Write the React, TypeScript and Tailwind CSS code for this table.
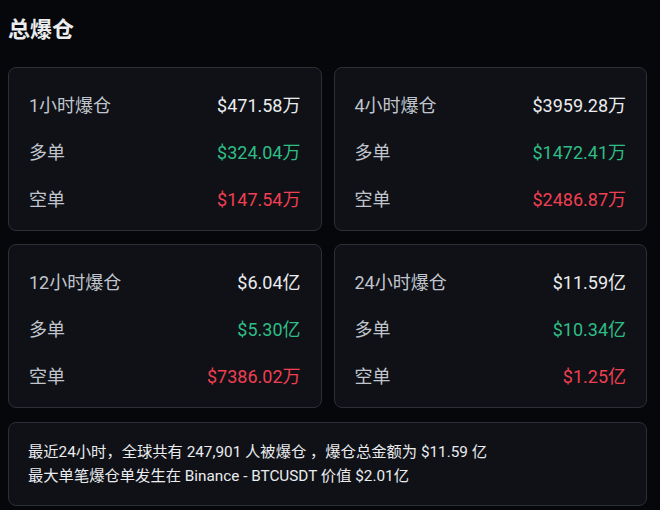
import React from "react";

type Row = { label: string; value: string; tone: "white" | "green" | "red" };

const cards: Row[][] = [
  [
    { label: "1小时爆仓", value: "$471.58万", tone: "white" },
    { label: "多单", value: "$324.04万", tone: "green" },
    { label: "空单", value: "$147.54万", tone: "red" },
  ],
  [
    { label: "4小时爆仓", value: "$3959.28万", tone: "white" },
    { label: "多单", value: "$1472.41万", tone: "green" },
    { label: "空单", value: "$2486.87万", tone: "red" },
  ],
  [
    { label: "12小时爆仓", value: "$6.04亿", tone: "white" },
    { label: "多单", value: "$5.30亿", tone: "green" },
    { label: "空单", value: "$7386.02万", tone: "red" },
  ],
  [
    { label: "24小时爆仓", value: "$11.59亿", tone: "white" },
    { label: "多单", value: "$10.34亿", tone: "green" },
    { label: "空单", value: "$1.25亿", tone: "red" },
  ],
];

const toneClass: Record<Row["tone"], string> = {
  white: "text-[#eaecef]",
  green: "text-[#2ebd85]",
  red: "text-[#ef3f52]",
};

const font = {
  fontFamily: 'Roboto, "Noto Sans CJK SC", sans-serif',
};

export default function App() {
  return (
    <div className="min-h-[510px] w-[660px] bg-[#06070b] pl-2 pt-[15px]" style={font}>
      <h1 className="text-[22px] font-bold leading-[30px] text-[#eaecef]">总爆仓</h1>
      <div className="mt-[22px] grid w-[639px] grid-cols-2 gap-x-3 gap-y-[13px]">
        {cards.map((rows, i) => (
          <div
            key={i}
            className="flex flex-col gap-[23px] rounded-lg border border-[#2b2f36] bg-[#0f1116] px-5 pb-[18px] pt-[26px]"
          >
            {rows.map((r, j) => (
              <div key={j} className="flex items-center justify-between leading-6">
                <span className="text-[18px] text-[#c1c6ce]">{r.label}</span>
                <span className={`text-[18px] ${toneClass[r.tone]}`}>{r.value}</span>
              </div>
            ))}
          </div>
        ))}
      </div>
      <div className="mt-[14px] w-[639px] rounded-lg border border-[#2b2f36] bg-[#0f1116] px-[19px] py-[17px] text-[15.3px] leading-6 text-[#eaecef]">
        <div>最近24小时，全球共有 247,901 人被爆仓 ，爆仓总金额为 $11.59 亿</div>
        <div>最大单笔爆仓单发生在 Binance - BTCUSDT 价值 $2.01亿</div>
      </div>
    </div>
  );
}
